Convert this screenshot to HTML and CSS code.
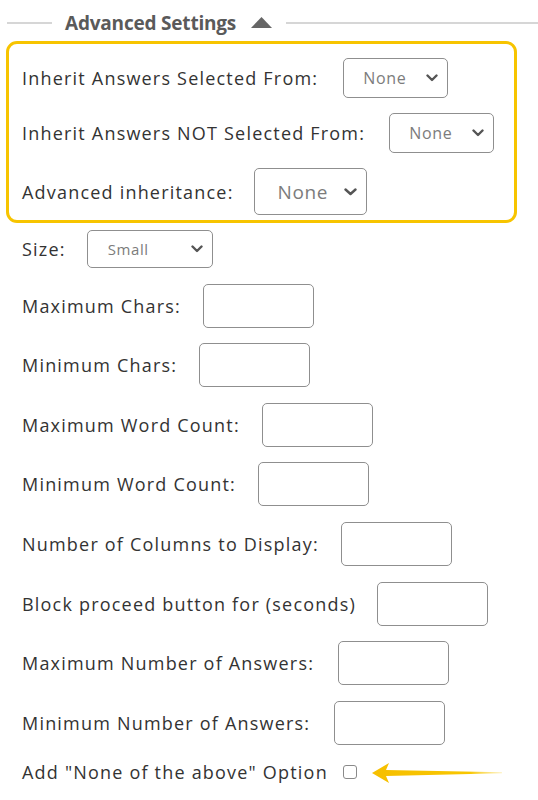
FILE: index.html
```html
<!DOCTYPE html>
<html>
<head>
<meta charset="utf-8">
<link rel="stylesheet" href="styles.css">
</head>
<body>
<div class="panel">
  <div class="section-head">
    <span class="rule rule-left"></span>
    <span class="head-title">Advanced Settings</span>
    <svg class="head-caret" width="21" height="11" viewBox="0 0 21 11"><polygon points="10.5,0 21,11 0,11" fill="#666"/></svg>
    <span class="rule rule-right"></span>
  </div>

  <div class="highlight">
    <div class="row row-a">
      <span class="label">Inherit Answers Selected From:</span>
      <div class="select sel-a"><span class="sel-text">None</span><svg class="chev" width="12" height="8" viewBox="0 0 12 8"><polyline points="1.5,1.5 6,6 10.5,1.5" fill="none" stroke="#555" stroke-width="2.4" stroke-linecap="round" stroke-linejoin="round"/></svg></div>
    </div>
    <div class="row row-b">
      <span class="label">Inherit Answers NOT Selected From:</span>
      <div class="select sel-b"><span class="sel-text">None</span><svg class="chev" width="12" height="8" viewBox="0 0 12 8"><polyline points="1.5,1.5 6,6 10.5,1.5" fill="none" stroke="#555" stroke-width="2.4" stroke-linecap="round" stroke-linejoin="round"/></svg></div>
    </div>
    <div class="row row-c">
      <span class="label">Advanced inheritance:</span>
      <div class="select sel-c"><span class="sel-text big">None</span><svg class="chev" width="13" height="8" viewBox="0 0 13 8"><polyline points="1.5,1.5 6.5,6 11.5,1.5" fill="none" stroke="#555" stroke-width="2.4" stroke-linecap="round" stroke-linejoin="round"/></svg></div>
    </div>
  </div>

  <div class="fields">
    <div class="row row-size">
      <span class="label">Size:</span>
      <div class="select sel-size"><span class="sel-text small">Small</span><svg class="chev" width="12" height="8" viewBox="0 0 12 8"><polyline points="1.5,1.5 6,6 10.5,1.5" fill="none" stroke="#555" stroke-width="2.4" stroke-linecap="round" stroke-linejoin="round"/></svg></div>
    </div>
    <div class="row"><span class="label">Maximum Chars:</span><span class="box-input"></span></div>
    <div class="row"><span class="label">Minimum Chars:</span><span class="box-input"></span></div>
    <div class="row"><span class="label">Maximum Word Count:</span><span class="box-input"></span></div>
    <div class="row"><span class="label">Minimum Word Count:</span><span class="box-input"></span></div>
    <div class="row"><span class="label">Number of Columns to Display:</span><span class="box-input"></span></div>
    <div class="row"><span class="label">Block proceed button for (seconds)</span><span class="box-input wide-gap"></span></div>
    <div class="row"><span class="label">Maximum Number of Answers:</span><span class="box-input loose"></span></div>
    <div class="row"><span class="label">Minimum Number of Answers:</span><span class="box-input loose"></span></div>
    <div class="row row-check">
      <span class="label">Add "None of the above" Option</span>
      <span class="checkbox"></span>
      <svg class="arrow" width="130" height="20" viewBox="0 0 130 20">
        <defs>
          <linearGradient id="fade" x1="0" y1="0" x2="1" y2="0">
            <stop offset="0" stop-color="#f6bf00"/>
            <stop offset="0.75" stop-color="#f8c600"/>
            <stop offset="1" stop-color="#fbe27a" stop-opacity="0.5"/>
          </linearGradient>
        </defs>
        <polygon points="0,10 17,0 14,7 130,9.3 130,10.3 14,13 17,20" fill="url(#fade)"/>
      </svg>
    </div>
  </div>
</div>
</body>
</html>
```

FILE: styles.css
```css
* { box-sizing: border-box; }

body {
  margin: 0;
  background: #ffffff;
  font-family: "Open Sans", "Noto Sans", "DejaVu Sans", sans-serif;
  color: #333333;
}

.panel {
  width: 538px;
  padding-top: 13px;
}

.section-head {
  display: flex;
  align-items: center;
  height: 20px;
  padding-left: 7px;
}

.rule {
  height: 2px;
  background: #d6d6d6;
}

.rule-left { width: 45px; }
.rule-right { flex: 1; margin-left: 14px; }

.head-title {
  margin-left: 13px;
  font-size: 19px;
  font-weight: 700;
  color: #5a5a5a;
  letter-spacing: -0.2px;
}

.head-caret {
  margin-left: 15px;
  margin-top: -2px;
}

.highlight {
  margin: 8px 0 0 6px;
  width: 511px;
  border: 3px solid #f7c400;
  border-radius: 11px;
  padding: 14px 13px 5px 13px;
  display: flex;
  flex-direction: column;
  gap: 15px;
}

.row {
  display: flex;
  align-items: center;
}

.label {
  font-size: 18px;
  letter-spacing: 1.2px;
  color: #333333;
  white-space: nowrap;
}

.select {
  display: flex;
  align-items: center;
  justify-content: space-between;
  border: 1.5px solid #8f8f8f;
  border-radius: 5px;
  background: #fff;
}

.sel-text {
  font-size: 16px;
  letter-spacing: 0.7px;
  color: #7c7c7c;
}

.sel-text.big { font-size: 19px; letter-spacing: 0.6px; }
.sel-text.small { font-size: 15px; letter-spacing: 0.6px; }

.sel-a { width: 105px; height: 40px; margin-left: 25px; padding: 0 9px 0 19px; }
.sel-b { width: 105px; height: 40px; margin-left: 24px; padding: 0 9px 0 19px; }
.sel-c { width: 113px; height: 47px; margin-left: 20px; padding: 0 9px 0 23px; }

.fields {
  padding: 7px 0 0 22px;
  display: flex;
  flex-direction: column;
  gap: 15.6px;
}

.sel-size { width: 126px; height: 38px; margin-left: 21px; padding: 0 9px 0 20px; }

.box-input {
  display: block;
  width: 111px;
  height: 44px;
  margin-left: 22px;
  border: 1.5px solid #8f8f8f;
  border-radius: 5px;
  background: #fff;
}

.box-input.wide-gap { margin-left: 21px; }
.box-input.loose { margin-left: 24px; }

.row-check {
  margin-top: 0;
}

.checkbox {
  display: block;
  width: 14px;
  height: 14px;
  margin-left: 15px;
  border: 1.5px solid #8a8a8a;
  border-radius: 3px;
  background: #fff;
}

.arrow {
  margin-left: 15px;
  margin-top: 2px;
}
```
